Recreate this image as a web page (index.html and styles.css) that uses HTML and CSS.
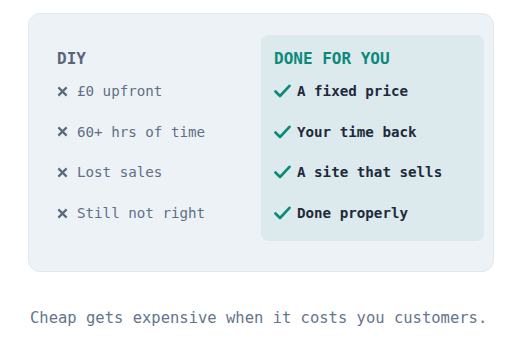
FILE: index.html
```html
<!DOCTYPE html>
<html lang="en">
<head>
<meta charset="utf-8">
<title>DIY vs Done for you</title>
<link rel="stylesheet" href="styles.css">
</head>
<body>
<main class="page">
  <section class="compare">
    <div class="col col-diy">
      <h3 class="col-title">DIY</h3>
      <ul class="list">
        <li class="item"><svg class="icon-x" viewBox="0 0 12 12" width="11" height="11"><path d="M1.5 1.5 L10.5 10.5 M10.5 1.5 L1.5 10.5"/></svg><span>£0 upfront</span></li>
        <li class="item"><svg class="icon-x" viewBox="0 0 12 12" width="11" height="11"><path d="M1.5 1.5 L10.5 10.5 M10.5 1.5 L1.5 10.5"/></svg><span>60+ hrs of time</span></li>
        <li class="item"><svg class="icon-x" viewBox="0 0 12 12" width="11" height="11"><path d="M1.5 1.5 L10.5 10.5 M10.5 1.5 L1.5 10.5"/></svg><span>Lost sales</span></li>
        <li class="item"><svg class="icon-x" viewBox="0 0 12 12" width="11" height="11"><path d="M1.5 1.5 L10.5 10.5 M10.5 1.5 L1.5 10.5"/></svg><span>Still not right</span></li>
      </ul>
    </div>
    <div class="col col-dfy">
      <h3 class="col-title">DONE FOR YOU</h3>
      <ul class="list">
        <li class="item"><svg class="icon-check" viewBox="0 0 17 14" width="17" height="14"><path d="M1.5 7.5 L6 12 L15.5 1.8"/></svg><span>A fixed price</span></li>
        <li class="item"><svg class="icon-check" viewBox="0 0 17 14" width="17" height="14"><path d="M1.5 7.5 L6 12 L15.5 1.8"/></svg><span>Your time back</span></li>
        <li class="item"><svg class="icon-check" viewBox="0 0 17 14" width="17" height="14"><path d="M1.5 7.5 L6 12 L15.5 1.8"/></svg><span>A site that sells</span></li>
        <li class="item"><svg class="icon-check" viewBox="0 0 17 14" width="17" height="14"><path d="M1.5 7.5 L6 12 L15.5 1.8"/></svg><span>Done properly</span></li>
      </ul>
    </div>
  </section>
  <p class="tagline">Cheap gets expensive when it costs you customers.</p>
</main>
</body>
</html>
```
FILE: styles.css
```css
* { box-sizing: border-box; }
html, body { margin: 0; padding: 0; background: #ffffff; }
body {
  font-family: "DejaVu Sans Mono", "Liberation Mono", monospace;
  color: #64748b;
}
.page {
  padding: 13px 0 0 28px;
}
.compare {
  width: 466px;
  display: grid;
  grid-template-columns: 1fr 223px;
  padding: 21px 9px 30px 28px;
  background: #edf2f6;
  border: 1px solid #e1e8ef;
  border-radius: 12px;
}
.col {
  padding: 12px 0 14px 0;
}
.col-dfy {
  background: #dce9ed;
  border-radius: 8px;
  padding: 12px 14px 14px 13px;
}
.col-title {
  margin: 0;
  font-size: 16px;
  line-height: 24px;
  font-weight: 700;
  color: #56657a;
  letter-spacing: 0;
}
.col-dfy .col-title { color: #0b8a7a; }
.list {
  list-style: none;
  margin: 6px 0 0 0;
  padding: 0;
  display: flex;
  flex-direction: column;
  gap: 12.7px;
}
.item {
  display: flex;
  align-items: center;
  height: 28px;
  font-size: 14.2px;
  color: #5f6f86;
}
.icon-x {
  flex: none;
  margin-right: 9px;
  fill: none;
  stroke: #5a697e;
  stroke-width: 2.4;
  stroke-linecap: butt;
}
.icon-check {
  flex: none;
  margin-right: 6px;
  fill: none;
  stroke: #0b8a7a;
  stroke-width: 2.6;
  stroke-linecap: round;
  stroke-linejoin: round;
}
.col-dfy .item {
  color: #1e2a3b;
  font-weight: 600;
}
.tagline {
  margin: 36px 0 0 2px;
  font-size: 15.5px;
  line-height: 20px;
  color: #64768c;
}
```
